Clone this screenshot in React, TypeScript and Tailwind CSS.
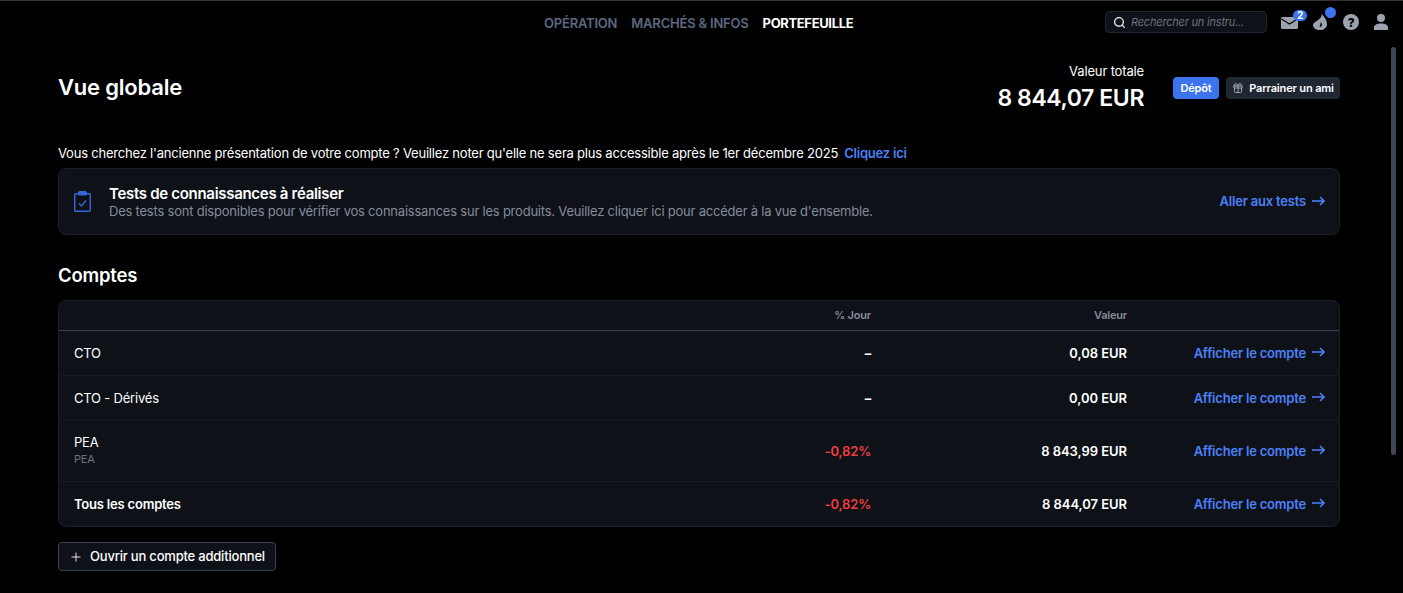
import { Plus, Search, Gift } from "lucide-react";

const rows = [
  { name: "CTO", day: "–", value: "0,08 EUR", h: "h-[45px]" },
  { name: "CTO - Dérivés", day: "–", value: "0,00 EUR", h: "h-[45px]" },
  { name: "PEA", sub: "PEA", day: "-0,82%", value: "8 843,99 EUR", h: "h-[61px]", red: true },
];

const LongArrow = () => (
  <svg width="13" height="10" viewBox="0 0 13 10" fill="none" stroke="currentColor" strokeWidth="1.6" className="-mt-[2px]">
    <path d="M0 5h12" />
    <path d="M8 1l4 4-4 4" />
  </svg>
);

const ShowAccount = () => (
  <a className="w-[198px] shrink-0 flex items-center justify-end gap-[6px] text-[13px] leading-[16px] font-semibold text-[#4c80f7]">
    Afficher le compte
    <LongArrow />
  </a>
);

export default function App() {
  return (
    <div className="h-[593px] w-[1403px] overflow-hidden bg-black text-white font-['Inter',sans-serif] tracking-[-0.2px] border-t border-[#333333]">
      <header className="relative h-[42px] flex items-center justify-end pr-[15px]">
        <nav className="absolute left-[544px] top-[13px] flex gap-[14px] text-[13px] font-semibold text-[#5d6880]">
          <span>OPÉRATION</span>
          <span>MARCHÉS &amp; INFOS</span>
          <span className="font-bold tracking-[-0.35px] text-white">PORTEFEUILLE</span>
        </nav>
        <div className="mr-[14px] flex h-[22px] w-[162px] items-center gap-[5px] rounded border border-[#1f2733] bg-[#0e1118] pl-[7px]">
          <Search size={13} strokeWidth={2.5} className="text-[#e5e7eb]" />
          <span className="text-[11px] italic text-[#6b7280]">Rechercher un instru...</span>
        </div>
        <div className="flex items-center gap-[15px] text-[#9ca3af]">
          <span className="relative mt-[1px]">
            <svg width="17" height="12" viewBox="0 0 17 12" className="block">
              <rect width="17" height="12" rx="1.500" fill="currentColor" />
              <path d="M0.500 2l8 5 8-5" fill="none" stroke="#000" strokeWidth="1.200" />
            </svg>
            <span className="absolute -right-[9px] -top-[7px] flex h-[11px] w-[14px] items-center justify-center rounded-full bg-[#3b74ee] text-[10px] font-bold text-white">2</span>
          </span>
          <span className="relative -mt-[1px]">
            <svg width="14" height="16" viewBox="0 0 14 16" fill="currentColor" className="block">
              <path d="M8.500 0c.4 2.700-1 4.300-3.800 6.200C2 8 0 9 0 10.900 0 13.900 3 16 7 16s7-2.300 7-5.800C14 6.400 11.200 2.100 8.500 0zM8 8c.9 1.600 1.300 2.800.6 4-.4.800-1.300 1.200-2 1 .5-1 .6-2.900 1.400-5z" fillRule="evenodd" />
            </svg>
            <span className="absolute -right-[9px] -top-[7px] h-[11px] w-[11px] rounded-full bg-[#3b74ee]" />
          </span>
          <svg width="16" height="16" viewBox="0 0 16 16" className="ml-[1px]">
            <circle cx="8" cy="8" r="8" fill="currentColor" />
            <text x="8" y="12.500" textAnchor="middle" fontSize="12" fontWeight="800" fill="#000">?</text>
          </svg>
          <svg width="14" height="16" viewBox="0 0 14 16" fill="currentColor">
            <circle cx="7" cy="4" r="4" />
            <path d="M0 16v-2.500C0 11 3 9.500 7 9.500s7 1.500 7 4V16z" />
          </svg>
        </div>
      </header>

      <div className="flex">
        <main className="w-[1388px] pl-[58px] pr-[48px]">
          <section className="flex h-[95px] items-start justify-between pt-[16px]">
            <h1 className="mt-[12px] text-[22px] font-semibold">Vue globale</h1>
            <div className="flex">
              <div className="flex flex-col items-end">
                <span className="mt-[3px] text-[13px] tracking-[-0.15px]">Valeur totale</span>
                <span className="-mt-[1px] text-[23px] font-semibold tracking-[-0.4px]">8 844,07 EUR</span>
              </div>
              <div className="ml-[29px] mt-[18px] flex h-[22px] gap-[7px] text-[11px] font-semibold">
                <button className="w-[46px] rounded bg-[#3b74ee]">Dépôt</button>
                <button className="flex w-[114px] items-center justify-center gap-[5px] rounded bg-[#1f2733] tracking-[-0.15px]">
                  <Gift size={12} className="text-[#9ca3af]" />
                  Parrainer un ami
                </button>
              </div>
            </div>
          </section>

          <p className="mt-[5px] h-[20px] text-[13px] leading-[20px] tracking-[-0.21px]">
            Vous cherchez l'ancienne présentation de votre compte ? Veuillez noter qu'elle ne sera plus accessible après le 1er décembre 2025
            <a className="ml-[6px] font-semibold text-[#4c80f7]">Cliquez ici</a>
          </p>

          <section className="mt-[5px] flex h-[67px] items-center rounded-lg border border-[#191e29] bg-[#0e1118] pl-[15px] pr-[14px]">
            <svg width="17" height="21" viewBox="0 0 17 21" fill="none" stroke="#3467d8" strokeWidth="1.400" className="shrink-0">
              <rect x="0.700" y="2.700" width="15.600" height="17.600" rx="1" />
              <rect x="4.700" y="0.700" width="7.600" height="3" rx="1" fill="#3467d8" />
              <path d="M5 12.500l2.500 2.500 4.500-5.500" />
            </svg>
            <div className="ml-[18px] flex-1">
              <div className="pt-[1px] text-[15px] font-semibold leading-[18px] tracking-[-0.3px]">Tests de connaissances à réaliser</div>
              <div className="-mt-[1px] text-[13px] leading-[18px] tracking-[-0.22px] text-[#858d9b]">
                Des tests sont disponibles pour vérifier vos connaissances sur les produits. Veuillez cliquer ici pour accéder à la vue d'ensemble.
              </div>
            </div>
            <a className="flex items-center gap-[6px] text-[13px] font-semibold text-[#4c80f7]">
              Aller aux tests
              <LongArrow />
            </a>
          </section>

          <h2 className="mt-[28px] h-[24px] text-[18.500px] font-semibold leading-[24px]">Comptes</h2>

          <section className="mt-[13px] overflow-hidden rounded-lg border border-[#191e29] bg-[#0e1118] text-[13px]">
            <div className="flex h-[30px] items-center border-b border-[#3a4152] pl-[15px] pr-[14px] text-[11px] font-semibold text-[#858d9b]">
              <span className="flex-1" />
              <span className="w-[120px] text-right">% Jour</span>
              <span className="w-[256px] text-right">Valeur</span>
              <span className="w-[198px]" />
            </div>
            {rows.map((r) => (
              <div key={r.name} className={`flex items-center border-b border-[#161a23] pl-[15px] pr-[14px] ${r.h} last:border-[#3a4152]`}>
                <div className={`flex-1 ${r.sub ? "pb-[2px]" : ""}`}>
                  <div className="leading-[16px]">{r.name}</div>
                  {r.sub && <div className="mt-[1px] text-[11px] leading-[16px] text-[#6b7280]">{r.sub}</div>}
                </div>
                <span className={`w-[120px] text-right font-bold leading-[16px] ${r.red ? "font-semibold text-[#ef3e3e]" : ""}`}>{r.day}</span>
                <span className="w-[256px] text-right font-semibold leading-[16px] tracking-[-0.05px]">{r.value}</span>
                <ShowAccount />
              </div>
            ))}
            <div className="flex h-[44px] items-center pl-[15px] pr-[14px] font-semibold leading-[16px]">
              <span className="flex-1">Tous les comptes</span>
              <span className="w-[120px] text-right text-[#ef3e3e]">-0,82%</span>
              <span className="w-[256px] text-right tracking-[-0.05px]">8 844,07 EUR</span>
              <ShowAccount />
            </div>
          </section>

          <button className="mt-[15px] flex h-[29px] w-[218px] items-center gap-[7px] rounded border border-[#3a4152] bg-[#0e1118] pl-[10px] text-[13px] font-medium">
            <Plus size={14} strokeWidth={1.500} />
            Ouvrir un compte additionnel
          </button>
        </main>
        <div className="ml-[3px] mt-[4px] h-[408px] w-[5px] rounded-full bg-[#3f4657]" />
      </div>
    </div>
  );
}
